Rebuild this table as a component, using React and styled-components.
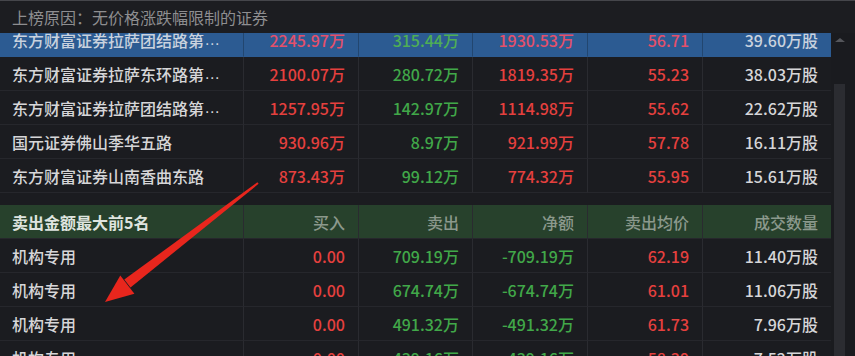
import React from "react";
import styled, { createGlobalStyle, css } from "styled-components";

const Global = createGlobalStyle`
  html, body { margin: 0; padding: 0; background: #1b1c20; }
  body { font-family: "Noto Sans CJK SC", "Noto Sans", sans-serif; }
`;

const COLS = "244px 115px 114px 115px 115px 128px";

const Page = styled.div`
  position: relative;
  width: 855px;
  height: 356px;
  overflow: hidden;
  background: #1b1c20;
  display: flex;
  flex-direction: column;
`;

const TitleBar = styled.div`
  height: 32px;
  flex: none;
  border-top: 1px solid #45464b;
  display: flex;
  align-items: center;
  padding-left: 12px;
  color: #8e8e90;
  font-size: 16px;
  background: #1c1d21;
`;

const Body = styled.div`
  flex: 1;
  display: flex;
  min-height: 0;
`;

const Viewport = styled.div`
  width: 831px;
  overflow: hidden;
`;

const Tables = styled.div`
  margin-top: -10px;
  display: flex;
  flex-direction: column;
`;

const Row = styled.div`
  display: grid;
  grid-template-columns: ${COLS};
  height: 34px;
  background: ${(p) => (p.$selected ? "#2c5b92" : p.$head ? "#27412c" : "transparent")};
`;

const Spacer = styled.div`
  height: 12px;
`;

const Cell = styled.div`
  display: flex;
  align-items: center;
  justify-content: ${(p) => (p.$left ? "flex-start" : "flex-end")};
  padding: 0 ${(p) => (p.$left ? "0 0 12px" : "13px 0 0")};
  border-right: 1px solid ${(p) => (p.$sel ? "#22466f" : "#2a2b30")};
  border-bottom: 1px solid ${(p) => (p.$sel ? "#2c5b92" : "#26272c")};
  font-size: 16px;
  font-weight: 500;
  white-space: nowrap;
  overflow: hidden;
  color: ${(p) =>
    p.$tone === "red"
      ? "#e5403e"
      : p.$tone === "green"
      ? "#41a849"
      : p.$tone === "head"
      ? "#8c998d"
      : "#d6d6d8"};
  ${(p) =>
    p.$sel &&
    css`
      color: ${p.$tone === "red" ? "#e4506a" : p.$tone === "green" ? "#4fae55" : "#c9d2de"};
    `}
  ${(p) =>
    p.$bold &&
    css`
      font-weight: 700;
      color: #dfe4df;
    `}
  &:last-child { border-right: none; }
`;

const Dots = styled.span`
  font-family: "Liberation Sans", sans-serif;
  letter-spacing: 0.5px;
  margin-left: 1px;
`;

const ScrollBar = styled.div`
  width: 24px;
  flex: none;
  background: #1a1b1f;
  display: flex;
  flex-direction: column;
  align-items: flex-start;
  padding-left: 3px;
  box-sizing: border-box;
`;

const UpArrow = styled.div`
  margin-top: 5px;
  margin-left: 1px;
  width: 0;
  height: 0;
  border-left: 5px solid transparent;
  border-right: 5px solid transparent;
  border-bottom: 4px solid #55565b;
`;

const Thumb = styled.div`
  margin-top: 42px;
  width: 11px;
  flex: 1;
  background: #2b2c31;
`;

const Annotation = styled.svg`
  position: absolute;
  left: 0;
  top: 0;
  pointer-events: none;
`;

const buyRows = [
  [["东方财富证券拉萨团结路第", true], "2245.97万", "315.44万", "1930.53万", "56.71", "39.60万股"],
  [["东方财富证券拉萨东环路第", true], "2100.07万", "280.72万", "1819.35万", "55.23", "38.03万股"],
  [["东方财富证券拉萨团结路第", true], "1257.95万", "142.97万", "1114.98万", "55.62", "22.62万股"],
  [["国元证券佛山季华五路", false], "930.96万", "8.97万", "921.99万", "57.78", "16.11万股"],
  [["东方财富证券山南香曲东路", false], "873.43万", "99.12万", "774.32万", "55.95", "15.61万股"],
];

const sellRows = [
  [["机构专用", false], "0.00", "709.19万", "-709.19万", "62.19", "11.40万股"],
  [["机构专用", false], "0.00", "674.74万", "-674.74万", "61.01", "11.06万股"],
  [["机构专用", false], "0.00", "491.32万", "-491.32万", "61.73", "7.96万股"],
  [["机构专用", false], "0.00", "439.16万", "-439.16万", "58.39", "7.52万股"],
];

function DataRow({ r, buy, selected }) {
  return (
    <Row $selected={selected}>
      <Cell $left $sel={selected}>
        {r[0][0]}
        {r[0][1] && <Dots>...</Dots>}
      </Cell>
      <Cell $tone="red" $sel={selected}>{r[1]}</Cell>
      <Cell $tone="green" $sel={selected}>{r[2]}</Cell>
      <Cell $tone={buy ? "red" : "green"} $sel={selected}>{r[3]}</Cell>
      <Cell $tone="red" $sel={selected}>{r[4]}</Cell>
      <Cell $sel={selected}>{r[5]}</Cell>
    </Row>
  );
}

export default function App() {
  return (
    <Page>
      <Global />
      <TitleBar>上榜原因：无价格涨跌幅限制的证券</TitleBar>
      <Body>
        <Viewport>
          <Tables>
            {buyRows.map((r, i) => (
              <DataRow key={i} r={r} buy selected={i === 0} />
            ))}
            <Spacer />
            <Row $head>
              <Cell $left $bold>卖出金额最大前5名</Cell>
              <Cell $tone="head">买入</Cell>
              <Cell $tone="head">卖出</Cell>
              <Cell $tone="head">净额</Cell>
              <Cell $tone="head">卖出均价</Cell>
              <Cell $tone="head">成交数量</Cell>
            </Row>
            {sellRows.map((r, i) => (
              <DataRow key={i} r={r} />
            ))}
          </Tables>
        </Viewport>
        <ScrollBar>
          <UpArrow />
          <Thumb />
        </ScrollBar>
      </Body>
      <Annotation width="855" height="356" viewBox="0 0 855 356">
        <polygon
          points="257.4,182.2 258.6,183.8 130.5,287.5 124.3,279.5"
          fill="#e8261d"
        />
        <polygon points="105,302 120.3,275.6 134.4,293.8" fill="#e8261d" />
      </Annotation>
    </Page>
  );
}
